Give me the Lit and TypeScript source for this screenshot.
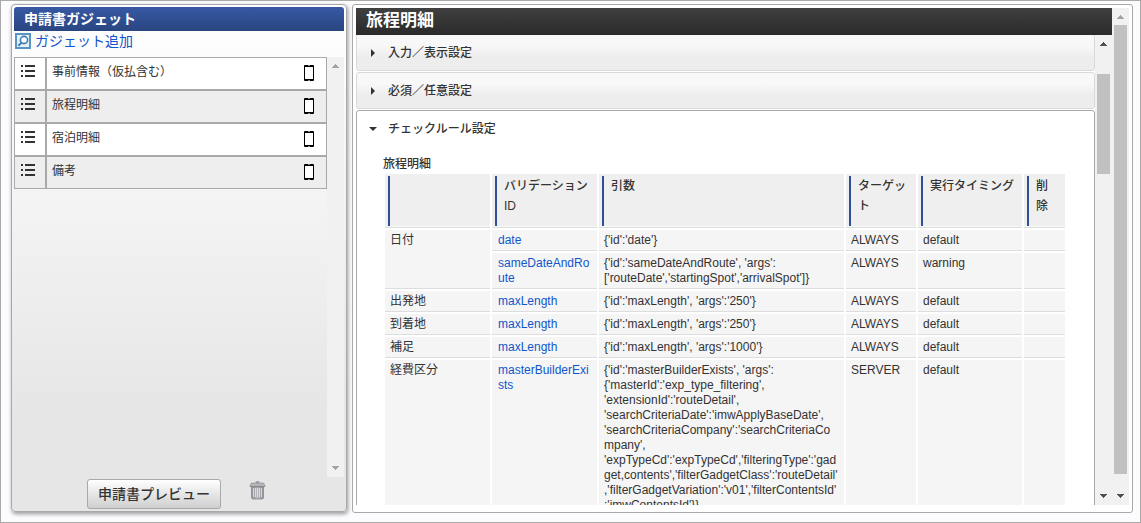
import { LitElement, html, css, svg, nothing } from "lit";
import { customElement, property } from "lit/decorators.js";

interface Rule {
  label?: string;
  span?: number;
  id: string;
  args: string;
  target: string;
  timing: string;
}

const GADGETS = ["事前情報（仮払含む）", "旅程明細", "宿泊明細", "備考"];

const HEADERS = ["", "バリデーションID", "引数", "ターゲット", "実行タイミング", "削除"];

const RULES: Rule[] = [
  { label: "日付", span: 2, id: "date", args: "{'id':'date'}", target: "ALWAYS", timing: "default" },
  {
    id: "sameDateAndRoute",
    args: "{'id':'sameDateAndRoute', 'args': ['routeDate','startingSpot','arrivalSpot']}",
    target: "ALWAYS",
    timing: "warning",
  },
  { label: "出発地", id: "maxLength", args: "{'id':'maxLength', 'args':'250'}", target: "ALWAYS", timing: "default" },
  { label: "到着地", id: "maxLength", args: "{'id':'maxLength', 'args':'250'}", target: "ALWAYS", timing: "default" },
  { label: "補足", id: "maxLength", args: "{'id':'maxLength', 'args':'1000'}", target: "ALWAYS", timing: "default" },
  {
    label: "経費区分",
    id: "masterBuilderExists",
    args:
      "{'id':'masterBuilderExists', 'args': {'masterId':'exp_type_filtering', 'extensionId':'routeDetail', " +
      "'searchCriteriaDate':'imwApplyBaseDate', 'searchCriteriaCompany':'searchCriteriaCompany', " +
      "'expTypeCd':'expTypeCd','filteringType':'gadget,contents','filterGadgetClass':'routeDetail'" +
      ",'filterGadgetVariation':'v01','filterContentsId':'imwContentsId'}}",
    target: "SERVER",
    timing: "default",
  },
];

@customElement("scroll-rail")
export class ScrollRail extends LitElement {
  @property({ type: Boolean, attribute: "up-off" }) upOff = false;
  @property({ type: Boolean, attribute: "down-off" }) downOff = false;
  /** Thumb start and length, as shares of the track in percent. */
  @property({ type: Number }) start = 0;
  @property({ type: Number }) length = 0;

  static styles = css`
    :host {
      display: flex;
      flex-direction: column;
      flex: 0 0 17px;
      background: #f1f1f1;
    }
    .arrow {
      display: block;
      flex: none;
      width: 17px;
      height: 17px;
      fill: #505050;
    }
    .off {
      fill: #a3a3a3;
    }
    .track {
      flex: 1;
      min-height: 0;
    }
    .space {
      width: 1px;
    }
    .thumb {
      margin: 0 2px;
      background: #c1c1c1;
    }
  `;

  render() {
    return html`
      <svg class="arrow ${this.upOff ? "off" : ""}" viewBox="0 0 17 17" shape-rendering="crispEdges">
        <path d="M8 7h1v1h1v1h1v1h1v1H5v-1h1V9h1V8h1z" />
      </svg>
      <div class="track">
        <div class="space" style="height:${this.start}%"></div>
        ${this.length ? html`<div class="thumb" style="height:${this.length}%"></div>` : nothing}
      </div>
      <svg class="arrow ${this.downOff ? "off" : ""}" viewBox="0 0 17 17" shape-rendering="crispEdges">
        <path d="M5 6h7v1h-1v1h-1v1H9v1H8V9H7V8H6V7H5z" />
      </svg>
    `;
  }
}

@customElement("gadget-panel")
export class GadgetPanel extends LitElement {
  static styles = css`
    * {
      box-sizing: border-box;
    }
    :host {
      box-sizing: border-box;
      display: flex;
      flex-direction: column;
      flex: 0 0 336px;
      margin-bottom: 1px;
      padding: 2px;
      border: 1px solid #a9a9a9;
      border-radius: 4px;
      background: linear-gradient(#ffffff, #f0f0f0 50%, #e6e6e6 80%);
      box-shadow: 1px 2px 4px rgba(0, 0, 0, 0.4);
    }
    .title {
      margin: 0;
      padding: 0 10px;
      border-radius: 3px 3px 0 0;
      background: linear-gradient(#3759a5, #2a4680);
      color: #fff;
      font-size: 14px;
      font-weight: 700;
      line-height: 24px;
    }
    .add {
      display: flex;
      align-items: center;
      gap: 4px;
      height: 26px;
      padding: 0 1px 6px;
      color: #1155cc;
      font-size: 14px;
      line-height: 20px;
      text-decoration: none;
    }
    .add svg {
      display: block;
    }
    .body {
      display: flex;
      flex: 1;
      min-height: 0;
    }
    .list {
      flex: 1;
      margin: 0;
      padding: 0;
      list-style: none;
    }
    .item {
      display: flex;
      height: 33px;
      background: #fff;
    }
    .item:nth-child(even) {
      background: #eee;
    }
    .grip {
      flex: 0 0 32px;
      padding: 7px 6px;
      border: 1px solid #a9a9a9;
    }
    .grip svg {
      display: block;
    }
    .name {
      display: flex;
      flex: 1;
      justify-content: space-between;
      padding: 4px 12px 0 5px;
      border: 1px solid #a9a9a9;
      font-size: 12px;
      line-height: 20px;
    }
    .phone {
      display: block;
      margin-top: 3px;
    }
    .foot {
      display: flex;
      align-items: flex-start;
      gap: 28px;
      padding: 2px 0 0 73px;
      height: 32px;
    }
    .preview {
      width: 134px;
      height: 30px;
      padding: 0;
      border: 1px solid #a9a9a9;
      border-radius: 3px;
      background: linear-gradient(#fff, #f0f0f0 30%, #cfcfcf);
      color: #333;
      font-family: inherit;
      font-size: 14px;
      font-weight: 500;
      line-height: 20px;
    }
    .trash {
      margin-top: 2px;
      padding: 0;
      border: 0;
      background: none;
    }
    .trash svg {
      display: block;
    }
  `;

  render() {
    return html`
      <h2 class="title">申請書ガジェット</h2>
      <a class="add" href="#">
        <svg width="16" height="16" viewBox="0 0 16 16">
          <rect x="1" y="1" width="14" height="14" fill="#e6f0f7" stroke="#5a94c2" stroke-width="2" />
          <circle cx="9" cy="7" r="3.6" fill="#fff" stroke="#3f7fb3" stroke-width="1.6" />
          <path d="M6.4 9.8L3.4 12.8" stroke="#3f7fb3" stroke-width="2" />
        </svg>
        <span>ガジェット追加</span>
      </a>
      <div class="body">
        <ul class="list">
          ${GADGETS.map(
            (name) => html`
              <li class="item">
                <span class="grip">
                  <svg width="14" height="12" viewBox="0 0 14 12" fill="#333">
                    ${[0, 5, 10].map((y) => svg`<path d="M0 ${y}h2v2H0zM4 ${y}h10v2H4z" />`)}
                  </svg>
                </span>
                <span class="name">
                  ${name}
                  <svg class="phone" width="10" height="16" viewBox="0 0 10 16">
                    <rect width="10" height="16" rx="1" fill="#000" />
                    <rect x="1" y="2" width="8" height="12" fill="#fff" />
                    <path d="M4 0.500h2M4 15.500h2" stroke="#888" />
                  </svg>
                </span>
              </li>
            `
          )}
        </ul>
        <scroll-rail up-off down-off aria-hidden="true"></scroll-rail>
      </div>
      <div class="foot">
        <button class="preview" type="button">申請書プレビュー</button>
        <button class="trash" type="button" aria-label="削除">
          <svg width="17" height="19" viewBox="0 0 17 19">
            <defs>
              <linearGradient id="can">
                <stop offset="0" stop-color="#8e8e94" />
                <stop offset="0.500" stop-color="#bcbcc2" />
                <stop offset="1" stop-color="#8e8e94" />
              </linearGradient>
            </defs>
            <path d="M7 0.500h3v1.500H7z" fill="#b4b4b8" stroke="#8f8f94" stroke-width="0.600" />
            <path d="M2.500 2h12l1.500 2.500v1H1v-1z" fill="#b4b4b9" stroke="#85858a" stroke-width="0.600" />
            <path d="M1 5.500h15" stroke="#85858a" />
            <path d="M2.500 6h12v10.500a1.500 1.500 0 0 1-1.500 1.500H4a1.500 1.500 0 0 1-1.500-1.500z" fill="url(#can)" stroke="#88888d" stroke-width="0.800" />
            <path d="M4.500 7v9M6.500 7v9M8.500 7v9M10.500 7v9M12.500 7v9" stroke="#dedee3" stroke-width="0.900" />
          </svg>
        </button>
      </div>
    `;
  }
}

@customElement("rule-table")
export class RuleTable extends LitElement {
  static styles = css`
    .rules {
      width: 100%;
      border-collapse: separate;
      border-spacing: 2px;
      table-layout: fixed;
      font-size: 12px;
      line-height: 15px;
    }
    .c0,
    .c1 {
      width: 105px;
    }
    .c3 {
      width: 70px;
    }
    .c4 {
      width: 104px;
    }
    .c5 {
      width: 41px;
    }
    th {
      padding: 2px 3px 1px;
      border-bottom: 1px solid #ddd;
      background: #efefef;
      box-shadow: inset 0 -1px #f8f8f8;
      font-weight: 500;
      text-align: left;
      vertical-align: top;
    }
    .head {
      box-sizing: border-box;
      min-height: 50px;
      padding: 0 4px 10px 7px;
      border-left: 2px solid #2f5096;
      line-height: 20px;
      word-break: break-word;
    }
    td {
      padding: 3px 5px 2px;
      border-bottom: 1px solid #ddd;
      background: #f5f5f5;
      overflow-wrap: anywhere;
      vertical-align: top;
    }
    .link {
      padding: 3px 6px 2px;
    }
    a {
      color: #1155cc;
      text-decoration: none;
    }
  `;

  render() {
    return html`
      <table class="rules" aria-label="旅程明細">
        <colgroup>
          ${HEADERS.map((_, i) => html`<col class="c${i}" />`)}
        </colgroup>
        <thead>
          <tr>
            ${HEADERS.map((h) => html`<th scope="col"><div class="head">${h}</div></th>`)}
          </tr>
        </thead>
        <tbody>
          ${RULES.map(
            (r) => html`
              <tr>
                ${r.label ? html`<td rowspan=${r.span ?? 1}>${r.label}</td>` : nothing}
                <td class="link"><a href="#">${r.id}</a></td>
                <td>${r.args}</td>
                <td>${r.target}</td>
                <td>${r.timing}</td>
                <td></td>
              </tr>
            `
          )}
        </tbody>
      </table>
    `;
  }
}

@customElement("detail-panel")
export class DetailPanel extends LitElement {
  static styles = css`
    * {
      box-sizing: border-box;
    }
    :host {
      box-sizing: border-box;
      display: flex;
      flex: 1;
      min-width: 0;
      padding: 3px 3px 7px;
      border: 1px solid #a9a9a9;
      border-radius: 3px;
      background: #fff;
    }
    .main {
      display: flex;
      flex: 1;
      flex-direction: column;
      min-width: 0;
    }
    .title {
      flex: none;
      margin: 0;
      padding: 0 10px 2px;
      background: linear-gradient(#404040, #2a2a2a);
      color: #fff;
      font-size: 17px;
      font-weight: 700;
      line-height: 25px;
    }
    .body {
      display: flex;
      flex: 1;
      min-height: 0;
    }
    .view {
      display: flex;
      flex: 1;
      flex-direction: column;
      gap: 1px;
      min-width: 0;
      overflow: hidden;
    }
    .section {
      flex: none;
      border: 1px solid #d7d9dc;
      border-radius: 3px;
      background: linear-gradient(#f8f8f8 30%, #ededed 65%);
    }
    .section:first-child {
      margin-top: -1px;
    }
    .open {
      border-color: #a9a9a9;
      background: #fff;
    }
    .toggle {
      display: flex;
      align-items: center;
      gap: 10px;
      width: 100%;
      height: 35px;
      padding: 0 11px;
      border: 0;
      background: none;
      color: #333;
      font-family: inherit;
      font-size: 12px;
      font-weight: 500;
      line-height: 20px;
      text-align: left;
    }
    .toggle svg {
      display: block;
      fill: #333;
    }
    .content {
      padding: 10px 27px 0 26px;
    }
    .caption {
      margin: 0;
      font-size: 12px;
      font-weight: 500;
      line-height: 16px;
    }
  `;

  private section(name: string, open: boolean, content: unknown = nothing) {
    return html`
      <section class="section ${open ? "open" : ""}">
        <button class="toggle" type="button" aria-expanded=${open ? "true" : "false"}>
          <svg width="10" height="8" viewBox="0 0 10 8">
            <path d=${open ? "M1 2h8L5 6z" : "M3 0v8l4-4z"} />
          </svg>
          ${name}
        </button>
        ${content}
      </section>
    `;
  }

  render() {
    return html`
      <div class="main">
        <h1 class="title">旅程明細</h1>
        <div class="body">
          <div class="view">
            ${this.section("入力／表示設定", false)} ${this.section("必須／任意設定", false)}
            ${this.section(
              "チェックルール設定",
              true,
              html`<div class="content">
                <h3 class="caption">旅程明細</h3>
                <rule-table></rule-table>
              </div>`
            )}
          </div>
          <scroll-rail start="5" length="23" aria-hidden="true"></scroll-rail>
        </div>
      </div>
      <scroll-rail up-off start="0" length="97" aria-hidden="true"></scroll-rail>
    `;
  }
}

@customElement("app-root")
export class AppRoot extends LitElement {
  static styles = css`
    :host {
      box-sizing: border-box;
      display: flex;
      gap: 5px;
      height: 100vh;
      padding: 3px 7px 9px 10px;
      border: 1px solid #a9a9a9;
      background: #fcfcff;
      color: #333;
      font-family: "Liberation Sans", "Noto Sans CJK JP", sans-serif;
      overflow: hidden;
    }
  `;

  render() {
    return html`
      <gadget-panel></gadget-panel>
      <detail-panel></detail-panel>
    `;
  }
}
